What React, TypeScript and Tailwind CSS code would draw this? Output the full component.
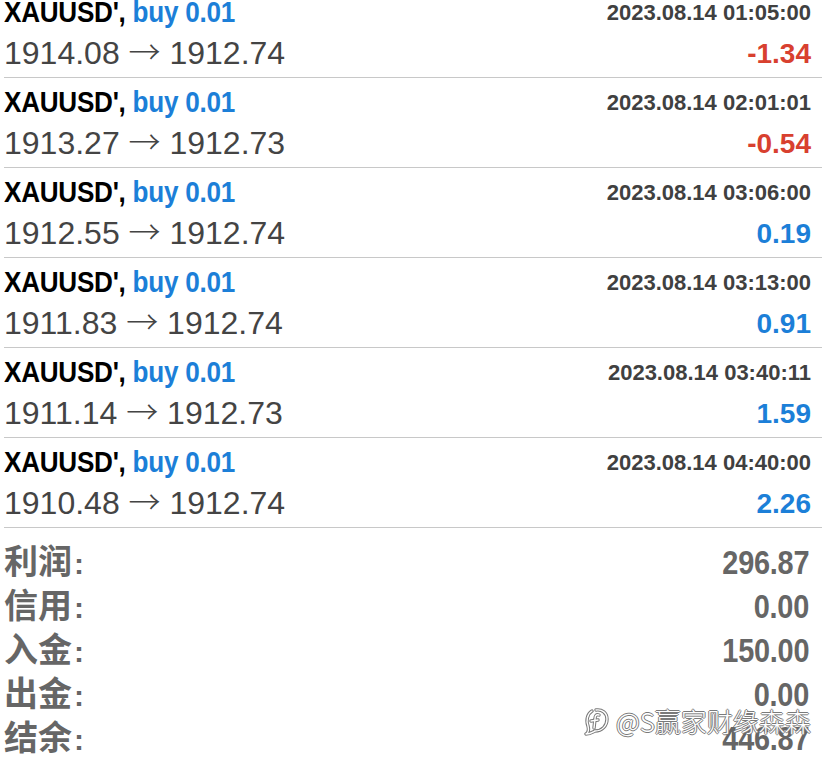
import React from "react";

const rows = [
  { open: "1914.08", close: "1912.74", time: "2023.08.14 01:05:00", pnl: "-1.34", neg: true },
  { open: "1913.27", close: "1912.73", time: "2023.08.14 02:01:01", pnl: "-0.54", neg: true },
  { open: "1912.55", close: "1912.74", time: "2023.08.14 03:06:00", pnl: "0.19", neg: false },
  { open: "1911.83", close: "1912.74", time: "2023.08.14 03:13:00", pnl: "0.91", neg: false },
  { open: "1911.14", close: "1912.73", time: "2023.08.14 03:40:11", pnl: "1.59", neg: false },
  { open: "1910.48", close: "1912.74", time: "2023.08.14 04:40:00", pnl: "2.26", neg: false },
];

const summary = [
  { label: "利润", value: "296.87" },
  { label: "信用", value: "0.00" },
  { label: "入金", value: "150.00" },
  { label: "出金", value: "0.00" },
  { label: "结余", value: "446.87" },
];

export default function App() {
  return (
    <div className="relative w-[822px] h-[768px] overflow-hidden bg-white font-['Liberation_Sans',Arial,sans-serif]">
      <div className="mt-[-12px]">
        {rows.map((r, i) => (
          <div key={i} className="ml-[4px] h-[90px] border-b border-[#c8c8c8] pr-[11px]">
            <div className="flex items-start justify-between h-[48px]">
              <div className="leading-[48px] text-[30px] font-bold whitespace-nowrap origin-left scale-x-[0.87] tracking-[-0.3px]">
                <span className="text-black">XAUUSD',</span>{" "}
                <span className="text-[#1c7fd8]">buy 0.01</span>
              </div>
              <div className="leading-[49px] text-[22px] font-bold text-[#404040] whitespace-nowrap">{r.time}</div>
            </div>
            <div className="flex items-start justify-between">
              <div className="leading-[29px] text-[32px] text-[#444444] whitespace-nowrap">
                {r.open}{" "}
                <span className="font-['Noto_Sans_CJK_SC',sans-serif] text-[32px] font-light">→</span>{" "}
                {r.close}
              </div>
              <div className={`leading-[36px] text-[28px] font-bold whitespace-nowrap ${r.neg ? "text-[#d8402f]" : "text-[#1c7fd8]"}`}>
                {r.pnl}
              </div>
            </div>
          </div>
        ))}
      </div>
      <div className="pt-[10px] pl-[4px] pr-[13px]">
        {summary.map((s, i) => (
          <div key={i} className="flex items-baseline justify-between h-[44px] leading-[44px]">
            <div className="text-[34px] font-semibold text-[#666666] font-['Noto_Sans_CJK_SC','Liberation_Sans',sans-serif] whitespace-nowrap">
              {s.label}<span className="font-['Liberation_Sans',sans-serif] font-bold text-[30px] ml-[2px]">:</span>
            </div>
            <div className="text-[34px] font-bold text-[#666666] origin-right scale-x-[0.85] tracking-[-0.3px]">
              {s.value}
            </div>
          </div>
        ))}
      </div>
      <div className="absolute left-[584px] top-[706px] flex items-center gap-[6px] text-white text-[26px] font-light font-['Noto_Sans_CJK_SC',sans-serif] whitespace-nowrap [text-shadow:1px_0_0_#7a7a7a,-1px_0_0_#7a7a7a,0_1px_0_#7a7a7a,0_-1px_0_#7a7a7a]">
        <svg width="26" height="30" viewBox="0 0 26 30" fill="none" strokeLinecap="round" strokeLinejoin="round">
          <g stroke="#7a7a7a" strokeWidth="3.4">
            <path d="M8 5 C3 8 2 15 4 20 C5 24 4 27 2 28 C6 28 9 26 11 25 C18 25 23 20 23 13 C23 7 18 3 12 4" />
            <path d="M15 9 C12 8 11 10 11 13 L10 22" />
            <path d="M7 15 L14 14" />
          </g>
          <g stroke="#ffffff" strokeWidth="1.4">
            <path d="M8 5 C3 8 2 15 4 20 C5 24 4 27 2 28 C6 28 9 26 11 25 C18 25 23 20 23 13 C23 7 18 3 12 4" />
            <path d="M15 9 C12 8 11 10 11 13 L10 22" />
            <path d="M7 15 L14 14" />
          </g>
        </svg>
        <span className="leading-[30px]">@S赢家财缘森森</span>
      </div>
    </div>
  );
}
